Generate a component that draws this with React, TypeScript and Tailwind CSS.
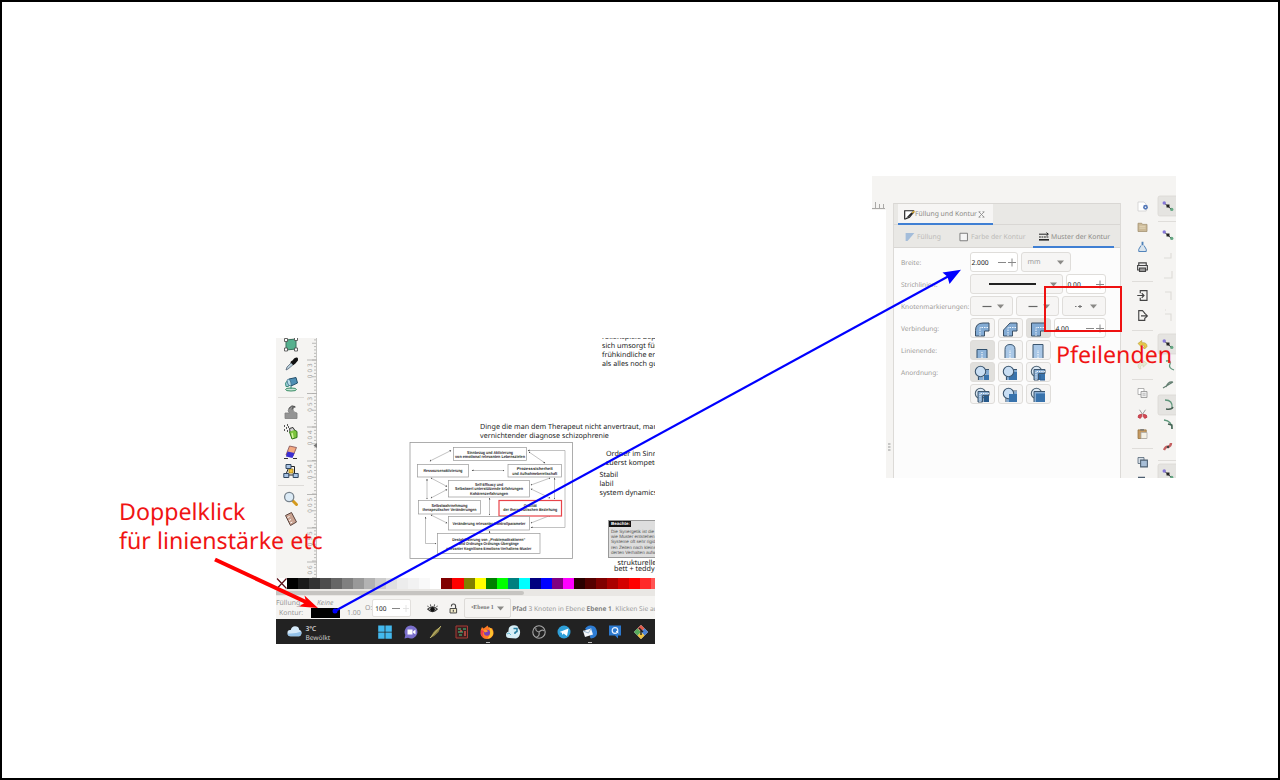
import React from "react";

type Kids = { children?: React.ReactNode };

function Ico({ children, s = 16, c = "" }: Kids & { s?: number; c?: string }) {
  return (
    <svg width={s} height={s} viewBox="0 0 16 16" className={"block shrink-0 " + c} fill="none">
      {children}
    </svg>
  );
}

/* ---------- toolbox ---------- */
function Toolbox() {
  return (
    <div className="flex w-[30px] shrink-0 flex-col items-center bg-[#f5f4f2] pr-[1px]">
      <Ico c="-mt-[1px]">
        <path d="M3 3L13 2L13 12L3 13Z" fill="#56b08e" stroke="#39705c" />
        <path d="M1.500 1.500h3v3h-3zM11.500 .5h3v3h-3zM11.500 11h3v3h-3zM1.500 11h3v3h-3z" fill="#fff" stroke="#555" strokeWidth=".9" />
      </Ico>
      <Ico c="mt-[3px]">
        <path d="M3 14L4 11L9 6L11 8L5 13Z" fill="#b9cfd9" stroke="#567" strokeWidth=".8" />
        <path d="M8 5.500L11 8.500M9.500 6L12 3q2.500-1.500 2 1L11.500 7Z" fill="#111" stroke="#111" strokeWidth="2" />
      </Ico>
      <Ico c="mt-[4px]">
        <ellipse cx="8" cy="13.500" rx="5.500" ry="1.500" fill="#c9e6d8" stroke="#3b8e66" />
        <path d="M6 3L13 1.500L14.500 7L8 10Z" fill="#4f8fb5" stroke="#25506b" />
        <path d="M5 4q-4 3-2 6.500q3 1 3.500-2" fill="#9fd0d8" stroke="#3b8e7e" strokeWidth="1" />
        <path d="M8 10v3" stroke="#3b8e7e" />
        <ellipse cx="6.300" cy="6.500" rx="1.700" ry="3.500" transform="rotate(-18 6 7)" fill="#b8dce9" stroke="#3a6c86" strokeWidth=".7" />
      </Ico>
      <div className="mt-[5px] h-px w-[26px] shrink-0 bg-[#dddbd8]" />
      <Ico c="mt-[6px]">
        <path d="M2 14.500V9h4.500q-2.500-2-.5-5q3-3.500 6.500-1q-3 .5-2.500 3q.4 2.500 4 3v5.500Z" fill="#949494" stroke="#7f7f7f" strokeWidth=".8" />
        <path d="M6 4.500q2.500-4 6-2q-3 0-3 3" stroke="#555" />
      </Ico>
      <Ico c="mt-[4px]">
        <path d="M6.500 8q1-3 4-2.500l3.500 2v6l-5 1.500Z" fill="#7cc53e" stroke="#32741a" />
        <path d="M7 7.500l-.5-3l3.500-1l1.500 2.500" fill="#d6d6d6" stroke="#333" />
        <path d="M1 2h1M3 4h1M1 6h1M4 1h1M4 7h1M5 3h1" stroke="#222" strokeWidth="1.300" />
        <path d="M9 9l1 5" stroke="#d2f29d" strokeWidth="1.500" />
      </Ico>
      <Ico c="mt-[4px]">
        <path d="M1 14.500h4M10 14.500h4" stroke="#333" />
        <path d="M6.500 2L13.500 3.500L10 12L3 11Z" fill="#f2a982" stroke="#7d4b52" strokeWidth=".8" />
        <path d="M4.500 7.500L11.500 9L9.500 14L3 12.500Z" fill="#3b2ed0" />
      </Ico>
      <Ico c="mt-[3px]">
        <path d="M5 3.500h6.500v8M5.500 5L3.500 10M5 12h6" stroke="#222" />
        <path d="M6 6h4v4H6z" fill="#f4c542" stroke="#9a7200" strokeWidth=".7" />
        <path d="M3 1.500h5v4H3zM.8 10.500h5v4h-5zM10.200 10.500h5v4h-5z" fill="#a9c4e6" stroke="#31465f" />
      </Ico>
      <div className="mt-[6px] h-px w-[26px] shrink-0 bg-[#dddbd8]" />
      <Ico c="mt-[5px]">
        <path d="M9.500 9.500L13.500 13.500" stroke="#d49a1e" strokeWidth="3" strokeLinecap="round" />
        <circle cx="6.200" cy="6" r="4.600" fill="#dcebf6" stroke="#77828c" strokeWidth="1.300" />
      </Ico>
      <Ico c="mt-[4px]">
        <path d="M2.500 4.500L8.500 1.500L13.500 11L7.500 14.500Z" fill="#caa391" stroke="#5c4640" />
        <path d="M4.500 6.500l2-1M6 9.500l2-1M7.300 12l2-1" stroke="#fff" />
      </Ico>
    </div>
  );
}

const marks: [number, string][] = [[360, "300"], [393.5, "350"], [427, "400"], [461, "450"], [494.5, "500"], [528, "550"], [562, "60"]];

function Ruler() {
  return (
    <svg width="11" height="240" viewBox="306 338 11 240" className="block shrink-0 bg-[#f5f4f2]">
      {Array.from({ length: 72 }, (_, i) => (
        <path key={i} d={`M${i % 5 === 1 ? 312 : 314} ${339.900 + i * 3.350}h5`} stroke="#aaa9a7" strokeWidth=".8" />
      ))}
      <path d="M316.500 338v240" stroke="#c6c5c3" />
      {marks.map(([y, t]) => (
        <g key={t}>
          <path d={`M307 ${y}h10`} stroke="#b0afad" strokeWidth=".9" />
          {t.split("").map((d, i) => (
            <text key={i} x="311.800" y={y + 2.200 + i * 5.600} fontSize="6.200" fill="#a3a2a0" textAnchor="middle" transform={`rotate(-90 311.800 ${y + 2.200 + i * 5.600}) translate(-3 0)`} fontFamily="Noto Sans, sans-serif">{d}</text>
          ))}
        </g>
      ))}
      <path d="M313.500 445.500l3.500-2.500v5z" fill="#777" />
    </svg>
  );
}

/* ---------- diagram ---------- */
type Node = { x: number; y: number; w: number; h: number; t: [string, number, number][]; red?: boolean };
const nodes: Node[] = [
  { x: 453.5, y: 447.5, w: 73, h: 13, t: [["Sinnbezug und Aktivierung", 453.5, 46], ["von emotional relevanten Lebenszielen", 458, 70]] },
  { x: 417.5, y: 464.5, w: 51, h: 12.5, t: [["Ressourcenaktivierung", 472.3, 39]] },
  { x: 508, y: 464.5, w: 53.5, h: 12.5, t: [["Prozesssicherheit", 470, 36], ["und Aufnahmebereitschaft", 474.500, 45]] },
  { x: 448.5, y: 480.5, w: 81, h: 16.5, t: [["Self-Efficacy und", 486, 28], ["Selbstwert unterstützende Erfahrungen", 490.300, 68], ["Kohärenzerfahrungen", 494.600, 38]] },
  { x: 418.5, y: 500.5, w: 62, h: 13.5, t: [["Selbstwahrnehmung", 506.8, 36], ["therapeutischer Veränderungen", 511.3, 54]] },
  { x: 499, y: 500.5, w: 62.5, h: 15.5, red: true, t: [["Qualität", 506.8, 13], ["der therapeutischen Beziehung", 511.3, 54]] },
  { x: 448.5, y: 516.5, w: 81, h: 13.5, t: [["Veränderung relevanter Kontrollparameter", 525, 73]] },
  { x: 437.5, y: 533.5, w: 102.5, h: 20, t: [["Destabilisierung von „Problemattraktoren“", 541, 73], ["und Ordnungs-Ordnungs-Übergänge", 545.200, 60], ["relevanter Kognitions-Emotions-Verhaltens-Muster", 549.500, 85]] },
];
const links = [
  "M430 461L451 450.500", "M529 452L545 463", "M472 470.500H504", "M431 478L447 486.500", "M431 498L447 489.500",
  "M550 478L531 485", "M531 489L550 498", "M427 479V499", "M554.500 478V499", "M489.500 498V515", "M431 515L447 523",
  "M550 515.500L531 523", "M489.500 531V533", "M436 543.500H425.500V517", "M528 450.500H565V527.500H531",
];

function Diagram() {
  return (
    <svg width="165" height="118" viewBox="409 442 165 118" className="absolute left-[133px] top-[104px]">
      <defs>
        <marker id="h" markerWidth="4" markerHeight="4" refX="2.500" refY="1.500" orient="auto-start-reverse">
          <path d="M0 0L3 1.500L0 3Z" fill="#444" />
        </marker>
      </defs>
      <rect x="410" y="442.500" width="162.500" height="116" fill="#fff" stroke="#999" strokeWidth=".8" />
      {links.map((d) => (
        <path key={d} d={d} fill="none" stroke="#999" strokeWidth=".6" markerStart="url(#h)" markerEnd="url(#h)" />
      ))}
      {nodes.map((n) => (
        <g key={n.y + "-" + n.x}>
          <rect x={n.x} y={n.y} width={n.w} height={n.h} fill="#fff" stroke={n.red ? "#e8444a" : "#999"} strokeWidth={n.red ? 1.2 : 0.7} />
          {n.t.map(([s, y, w]) => (
            <text key={s} x={n.x + n.w / 2} y={y} textAnchor="middle" fontSize="4.200" fontWeight="700" fill="#2a2a2a" textLength={w} lengthAdjust="spacingAndGlyphs" fontFamily="Liberation Sans, sans-serif">{s}</text>
          ))}
        </g>
      ))}
    </svg>
  );
}

function Note({ children, className }: Kids & { className: string }) {
  return <div className={"absolute whitespace-pre text-[7.180px] leading-[9px] text-[#1a1a1a] " + className}>{children}</div>;
}

function Drawing() {
  return (
    <>
      <Note className="left-[326px] top-[-5px]">{"rollenspiele bep\nsich umsorgt für\nfrühkindliche er\nals alles noch gu"}</Note>
      <Note className="left-[204px] top-[85px]">{"Dinge die man dem Therapeut nicht anvertraut, man\nvernichtender diagnose schizophrenie"}</Note>
      <Note className="left-[330px] top-[112px]">{"Ordner im Sinne\nzuerst kompete"}</Note>
      <Note className="left-[323.500px] top-[133px]">{"Stabil\nlabil\nsystem dynamics"}</Note>
      <Diagram />
      <div className="absolute left-[332px] top-[182px] h-[38px] w-[60px] border border-[#999] bg-[#dedede]">
        <div className="flex h-[6px] w-[22px] items-center bg-[#111] pl-[2px] font-['Liberation_Sans',sans-serif] text-[4.500px] font-bold text-white">Beachte:</div>
        <div className="whitespace-pre pl-[2px] pt-[2px] font-['Liberation_Sans',sans-serif] text-[4.600px] leading-[5.200px] text-[#555]">
          {"Die Synergetik ist die Theorie\nwie Muster entstehen und\nSysteme oft sehr rigide\nren Zeiten nach kleinsten\nderten Verhalten aufweisen"}
        </div>
      </div>
      <Note className="left-[341.500px] top-[221px]">strukturelle</Note>
      <Note className="left-[338px] top-[227px]">bett + teddy</Note>
    </>
  );
}

/* ---------- palette and bars ---------- */
const swatches = [
  "#000000", "#1a1a1a", "#333333", "#4d4d4d", "#666666", "#808080", "#999999", "#b3b3b3", "#cccccc", "#e0e0e0", "#ececec", "#f2f2f2", "#f9f9f9", "#ffffff",
  "#800000", "#ff0000", "#808000", "#ffff00", "#008000", "#00ff00", "#008080", "#00ffff", "#000080", "#0000ff", "#800080", "#ff00ff",
  "#2b0000", "#550000", "#800000", "#aa0000", "#d40000", "#ff0000", "#ff2a2a", "#ff5555",
];

function Palette() {
  return (
    <div className="flex h-[11px] shrink-0 overflow-hidden">
      <svg width="11" height="11" viewBox="0 0 11 11" className="shrink-0">
        <path d="M0 0h11v11H0z" fill="#fff" />
        <path d="M1 .5L10.500 10.500M10.500 .5L1 10.500" stroke="#5a1018" strokeWidth="1.200" />
      </svg>
      {swatches.map((c, i) => (
        <div key={i} className="w-[11.040px] shrink-0" style={{ backgroundColor: c }} />
      ))}
    </div>
  );
}

function StatusBar() {
  return (
    <div className="flex h-[23px] shrink-0 items-center overflow-hidden whitespace-nowrap bg-[#f5f4f2] text-[6.900px] text-[#999]">
      <div className="flex w-[89px] shrink-0 flex-col">
        <div className="flex h-[9px] items-center pt-[4px]"><span className="w-[41px]">Füllung:</span><span className="italic">Keine</span></div>
        <div className="flex h-[10px] items-center">
          <span className="w-[35px] pl-[3px] pt-[4px]">Kontur:</span>
          <span className="mt-[2px] h-[10px] w-[29px] bg-black" />
          <span className="pl-[7px] pt-[5px]">1.00</span>
        </div>
      </div>
      <span className="w-[8px] pt-[3px]">O:</span>
      <div className="mt-[1px] flex h-[18px] w-[39px] shrink-0 items-center rounded-[2px] border border-[#e2e0dd] bg-white pl-[2px] text-[6.500px] text-[#222]">
        <span className="w-[17px] pt-[2px]">100</span>
        <svg width="18" height="8" viewBox="0 0 18 8"><path d="M0 4.500h8" stroke="#777" strokeWidth=".9" /><path d="M11 4.500h6M14 1v7" stroke="#ddd" strokeWidth=".8" /></svg>
      </div>
      <Ico s={11} c="ml-[16px] mt-[1px]">
        <path d="M1 9q7-7 14 0q-7 7-14 0Z" fill="#bbb" stroke="#333" strokeWidth="1.500" />
        <circle cx="8" cy="9" r="3.300" fill="#111" />
        <path d="M2 6L1 4M5.500 5L5 2M10.500 5L11 2M14 6l1-2" stroke="#333" strokeWidth="1.200" />
      </Ico>
      <Ico s={11} c="ml-[10px] mt-[1px]">
        <path d="M5 5V4.500q0-3 3-3t3 3v4" stroke="#444" strokeWidth="1.700" />
        <path d="M3 8h9.500v6.500H3z" fill="#f1eac8" stroke="#444" strokeWidth="1.400" />
        <path d="M7.800 9.800v3" stroke="#555" strokeWidth="1.800" />
      </Ico>
      <div className="ml-[5px] mt-[1px] flex h-[20px] w-[47px] shrink-0 items-center justify-between rounded-[2px] border border-[#dddbd8] px-[6px] text-[6px] text-[#777]">
        <span className="font-['Liberation_Serif',serif] font-bold">•Ebene 1</span><Caret />
      </div>
      <span className="pl-[1px] pt-[2px] text-[6.620px]"><b className="font-semibold text-[#777]">Pfad</b> 3 Knoten in Ebene <b className="font-semibold text-[#777]">Ebene 1</b>. Klicken Sie auf</span>
    </div>
  );
}

function Caret() {
  return <svg width="7" height="5" viewBox="0 0 7 5" className="shrink-0"><path d="M0 .5h7L3.500 4.500Z" fill="#8a8986" /></svg>;
}

function Taskbar() {
  return (
    <div className="flex h-[25px] shrink-0 items-center overflow-hidden bg-[#222222] text-[6.600px] text-[#eee]">
      <Ico s={15} c="ml-[11px]">
        <path d="M4 13q-3.500 0-3.500-3.500t3.500-3q1-4 4.500-4Q12.500 2.500 13 6q2.500.5 2.500 3.500t-2.500 3.500Z" fill="#d5e9f9" />
        <path d="M4 13q-3 0-3.400-3q7 1 14.800-2q0 5-2.400 5Z" fill="#93c1e8" />
      </Ico>
      <div className="ml-[3.500px] w-[70.500px] shrink-0 pt-[2px] leading-[9px]"><div className="text-white">3°C</div><div className="text-[#ccc]">Bewölkt</div></div>
      <div className="relative flex shrink-0 gap-[9.600px] pl-[1px]">
        <Ico><path d="M1.200 1.500h6.400v6.200H1.200zM8.400 1.500h6.400v6.200H8.400zM1.200 8.500h6.400v6.200H1.200zM8.400 8.500h6.400v6.200H8.400z" fill="#43b9ee" /></Ico>
        <Ico><path d="M8 1.500a6.500 6.500 0 1 1-3 12.300L1.500 14.500l.8-3.500A6.500 6.500 0 0 1 8 1.500Z" fill="#7a6fcb" /><path d="M4.500 5.500h5v5h-5zM10 7.500l2.500-2v5L10 8.500Z" fill="#fff" /></Ico>
        <Ico><path d="M2.500 14Q5 7 9 5L13 2.500L10.500 8Q7 12 2.500 14Z" fill="#8c8140" /><path d="M2 14L13 2" stroke="#d8cf88" strokeWidth=".8" /></Ico>
        <Ico><path d="M2 2h11.500v12H2z" fill="#3a2020" stroke="#a83a35" /><path d="M4 5h3M9 5h3M4 8h5M5 11h3" stroke="#3f9465" strokeWidth="1.500" /><path d="M11 7v5M7 6v2" stroke="#d8574d" strokeWidth="1.400" /></Ico>
        <Ico>
          <path d="M3 3l1.500 1.500Q7 3 8.500 1.500q.5 2 3 3L13 4q2 3 1.500 6-1.500 5-6.500 5T1.500 10Q1 6 3 3Z" fill="#ff7a24" />
          <path d="M10 3q5 3 4 7.500q-2 4-5.500 4Q13 9 10 3Z" fill="#ffc32e" />
          <path d="M2 6q-1 5 3 8q-3-5 1-7Z" fill="#ef3b4e" />
          <circle cx="8" cy="8.700" r="3" fill="#7941b8" /><path d="M4 6.500q4-2 5 1l-3 1Z" fill="#ff9b2b" />
        </Ico>
        <Ico><path d="M4 14q-3 0-3-3t2.500-3.500Q3 2.500 7 1.500q6-1 6.500 3q2 1 1.500 5T11 14.500Z" fill="#d7eef6" /><path d="M8.500 4.500h3.500v3l-2 1v1.500" stroke="#277d9f" strokeWidth="1.500" /><path d="M2 10l2-1 2 2" stroke="#68b9d0" /></Ico>
        <Ico><circle cx="8" cy="8" r="6.200" fill="#222" stroke="#a9a9a9" strokeWidth="1.100" /><path d="M8 8q-4-1-3-4M8 8q3-3 5.500-1M8 8q1 4-2.500 5" stroke="#999" strokeWidth="1.200" /></Ico>
        <Ico><circle cx="8" cy="8" r="6.500" fill="#2e9fd8" /><path d="M3.500 8L12.500 4.500L11 12L7.500 9.500L6 11V8.800Z" fill="#fff" /></Ico>
        <Ico><path d="M3 5Q5 1 9 1.500q5 0 6 6t-6 7q-2-1 0-5Z" fill="#2d7cd3" /><path d="M1 7l8-2.500l2 6l-8 2.500Z" fill="#f4f7fa" /><path d="M1 7l5.500 2L9 4.500" stroke="#9db7cc" /></Ico>
        <Ico><path d="M2 1.500h12v10h-3v3l-3-3H2Z" fill="#2b79cf" /><circle cx="8" cy="6.500" r="2.800" stroke="#e8f2ff" strokeWidth="1.200" /><path d="M9 7l2.500 2" stroke="#fff" /></Ico>
        <Ico><path d="M8 1L15 8L8 15L1 8Z" fill="#eee" /><path d="M8 1L4.500 4.500L8 8L11.500 4.500Z" fill="#e35b4c" /><path d="M15 8l-3.500-3.500L8 8l3.500 3.500Z" fill="#4b82d5" /><path d="M8 15l-3.500-3.500L8 8l3.500 3.500Z" fill="#efc23c" /><path d="M1 8l3.500-3.500L8 8l-3.500 3.500Z" fill="#58ac5c" /><path d="M6 4l4 4M8 6v5" stroke="#222" strokeWidth="1.400" /></Ico>
        <div className="absolute left-[109.500px] top-[18px] h-[1px] w-[4px] bg-[#bbb]" />
        <div className="absolute left-[212px] top-[18px] h-[1px] w-[4px] bg-[#bbb]" />
      </div>
    </div>
  );
}

function InkscapeWindow() {
  return (
    <section className="absolute left-[276px] top-[338px] flex h-[306px] w-[379px] flex-col overflow-hidden bg-white">
      <div className="flex h-[240px] shrink-0 overflow-hidden"><Toolbox /><Ruler /></div>
      <Drawing />
      <div className="relative flex flex-col">
        <Palette />
        <div className="flex h-[7px] items-center bg-[#e9e7e4]"><div className="h-[4px] w-[248px] rounded-r bg-[#c6c4c1]" /></div>
        <StatusBar />
        <Taskbar />
      </div>
    </section>
  );
}

/* ---------- fill and stroke dialog ---------- */
function Box({ children, className = "" }: Kids & { className?: string }) {
  return <div className={"flex h-[20px] shrink-0 items-center rounded-[3px] border border-[#dfddda] bg-[#f6f5f4] " + className}>{children}</div>;
}

function PlusMinus({ faint = false }: { faint?: boolean }) {
  return (
    <svg width="19" height="9" viewBox="0 0 19 9" className="shrink-0">
      {!faint && <path d="M0 4.500h8" stroke="#888" />}
      <path d="M10 4.500h8M14 .5v8" stroke="#888" />
    </svg>
  );
}

function Row({ label, children }: Kids & { label: string }) {
  return (
    <div className="flex h-[22px] items-center">
      <span className="w-[68.500px] shrink-0 pt-[2px] text-[6.600px] text-[#9c9b98]">{label}</span>
      <div className="flex items-center gap-[3px]">{children}</div>
    </div>
  );
}

function Tile({ on = false, children }: Kids & { on?: boolean }) {
  return <Box className={"w-[25px] justify-center " + (on ? "bg-[#e1e0dd]!" : "")}><Ico s={16} c="mt-[1px]">{children}</Ico></Box>;
}

function Join({ d }: { d: string }) {
  return (
    <>
      <path d={d} fill="#83abd4" />
      <path d={d} stroke="#3b5066" strokeWidth="1" />
      <path d="M6 15V6.500h9" stroke="#eef6ff" strokeWidth="1" strokeDasharray="1.500 1" />
    </>
  );
}

function Order({ v }: { v: number }) {
  const circle = <circle cx="6.500" cy="6.500" r="5.200" fill="#c9def3" stroke="#3c566f" strokeWidth="1.100" />;
  const fill = <path d="M7 7h8v8H7z" fill="#3973ac" />;
  const stroke = <path d="M4 4.500h11v4H8.500v6.500H4Z" fill="#86acd3" stroke="#3c566f" strokeWidth="1" />;
  const ring = <circle cx="6.500" cy="6.500" r="5.200" fill="#dce9f5" stroke="#4d6273" strokeWidth="1.100" />;
  const dash = <path d="M6 15V6.500h9" stroke="#fff" strokeWidth=".9" strokeDasharray="1.300 1" />;
  if (v === 0) return <><path d="M10 10h5v5h-5z" fill="#3973ac" /><path d="M11 4.500h4M4.500 11v4" stroke="#3c566f" strokeWidth="1.200" /><path d="M12 5v5h3V5zM5 12h4.500v3H5z" fill="#86acd3" />{circle}</>;
  if (v === 1) return <><path d="M11 4.500h4M4.500 11v4" stroke="#3c566f" strokeWidth="1.200" /><path d="M12 5h3v3h-3zM5 12h3v3H5z" fill="#86acd3" />{fill}{circle}</>;
  if (v === 2) return <>{ring}<path d="M8.500 8.500h6.500v6.500H8.500z" fill="#3973ac" />{stroke}{dash}<path d="M10 10v5h5" stroke="#2b5d92" /></>;
  if (v === 3) return <>{ring}{stroke}<path d="M9.500 9h5.500v6H9.500z" fill="#285b8d" />{dash}</>;
  if (v === 4) return <><path d="M11 4h4M4 11v4" stroke="#3c566f" strokeWidth="1.100" /><path d="M12 4.500h3v3h-3zM4.500 12h3v3h-3z" fill="#86acd3" />{circle}{fill}</>;
  return <>{ring}<path d="M4 4.500h11V15H4Z" fill="#86acd3" /><path d="M15 4.500H4V15" stroke="#3c566f" /><path d="M6 6.500h9V15H6z" fill="#3973ac" /></>;
}

function Marker({ w, dot = false }: { w: string; dot?: boolean }) {
  return (
    <Box className={"justify-between pl-[11px] pr-[8px] " + w}>
      <svg width="10" height="5" viewBox="0 0 10 5">{dot ? <path d="M1 2.500h1.500M4 2.500h4M6 1v3" stroke="#777" strokeWidth="1.200" /> : <path d="M.5 2.500h9" stroke="#666" strokeWidth="1.200" />}</svg>
      <Caret />
    </Box>
  );
}

function Dialog() {
  return (
    <div className="flex w-[228px] shrink-0 flex-col border-x border-[#dcdad7] bg-[#fcfcfc]">
      <div className="flex h-[22px] shrink-0 border-b border-[#d9d7d4] border-t bg-[#e9e8e5] pl-[4px]">
        <div className="flex h-[21px] w-[95px] items-center border-b-2 border-[#3f7fd3] bg-[#f6f5f4] pl-[6px] pt-[1px] text-[6.800px] text-[#8b8a87]">
          <Ico s={11}><path d="M1 2.500h13v2L8 12l-6 2.500H1Z" fill="#fff" stroke="#222" strokeWidth="1.700" /><path d="M3 13Q8 7 14 2.500L15 5L8 11Z" fill="#222" /><path d="M12 6l3-3" stroke="#e3b230" strokeWidth="2" /></Ico>
          <span className="whitespace-nowrap pt-[1px]">Füllung und Kontur</span>
          <svg width="7" height="7" viewBox="0 0 7 7" className="ml-[1px] mt-[1px]"><path d="M1 1l5 5M6 1L1 6M.5 .8h2M4.500 .8h2M.5 6.200h2M4.500 6.200h2" stroke="#888" strokeWidth=".8" /></svg>
        </div>
      </div>
      <div className="flex h-[23px] shrink-0 items-stretch whitespace-nowrap border-b border-[#d9d7d4] bg-[#e9e8e5] text-[6.800px] text-[#bcbbb8]">
        <div className="flex w-[53px] items-center gap-[2px] pl-[11px] pt-[2px]"><Ico s={10}><path d="M1 1.500h14L4 14.500H1Z" fill="#a4bdda" /></Ico><span className="pt-[1px]">Füllung</span></div>
        <div className="flex w-[86px] items-center gap-[2px] pl-[12px] pt-[2px]"><Ico s={10}><path d="M1.500 2h12v12h-12z" fill="#f5f5f5" stroke="#777" strokeWidth="1.500" /></Ico><span className="pt-[1px]">Farbe der Kontur</span></div>
        <div className="flex h-[23px] w-[81px] items-center gap-[2px] border-b-2 border-[#3f7fd3] pl-[6px] pt-[3px] text-[#8b8a87]"><Ico s={10}><path d="M0 3.500h14M12 1l3 2.500L12 6" stroke="#222" strokeWidth="1.600" /><path d="M0 8h15" stroke="#222" strokeWidth="1.700" strokeDasharray="3 1" /><path d="M0 12.500h16" stroke="#222" strokeWidth="2.500" /></Ico><span className="pt-[1px]">Muster der Kontur</span></div>
      </div>
      <div className="flex flex-col pl-[7px] pt-[3px]">
        <Row label="Breite:">
          <Box className="w-[48px] bg-white! pl-[1px] text-[6.700px] text-[#222]"><span className="w-[27px] pt-[2px]">2.000</span><PlusMinus /></Box>
          <Box className="w-[50px] justify-between pl-[6px] pr-[6px] text-[7px] text-[#999]"><span className="pt-[2px]">mm</span><Caret /></Box>
        </Row>
        <Row label="Strichlinien:">
          <Box className="w-[93px] pl-[18px] pr-[5px]"><span className="h-[1.500px] w-[47px] bg-[#222]" /><span className="ml-auto"><Caret /></span></Box>
          <Box className="w-[40px] justify-between bg-white! pl-[1px] text-[6.700px] text-[#222]"><span className="pt-[2px]">0.00</span><PlusMinus faint /></Box>
        </Row>
        <Row label="Knotenmarkierungen:"><Marker w="w-[43px]" /><Marker w="w-[43px]" /><Marker w="w-[44px]" dot /></Row>
        <Row label="Verbindung:">
          <Tile><Join d="M1.500 15V9.500Q1.500 2 9 2H15V10H10.500V15Z" /></Tile>
          <Tile><Join d="M1.500 15V9L8 2H15V10H10.500V15Z" /></Tile>
          <Tile on><Join d="M1.500 15V2H15V10H10.500V15Z" /></Tile>
          <Box className="w-[52px] justify-between bg-white! pl-[1px] text-[6.700px] text-[#222]"><span className="pt-[2px]">4.00</span><PlusMinus /></Box>
        </Row>
        <Row label="Linienende:">
          <Tile on><path d="M3 15V6.500h10v8.500" fill="#8fb4d9" stroke="#31506e" /><path d="M8 15V9" stroke="#fff" strokeDasharray="1.500 1" /></Tile>
          <Tile><path d="M3 15V6.500q0-5 5-5t5 5v8.500" fill="#a9c7e6" stroke="#3c566f" /><path d="M8 15V7" stroke="#fff" strokeDasharray="1.500 1" /></Tile>
          <Tile><path d="M3 15V1.500h10v13.500" fill="#a9c7e6" stroke="#3c566f" /><path d="M8 15V7" stroke="#fff" strokeDasharray="1.500 1" /></Tile>
        </Row>
        <Row label="Anordnung:"><Tile on><Order v={0} /></Tile><Tile><Order v={1} /></Tile><Tile><Order v={2} /></Tile></Row>
        <Row label=""><Tile><Order v={3} /></Tile><Tile><Order v={4} /></Tile><Tile><Order v={5} /></Tile></Row>
      </div>
    </div>
  );
}

/* ---------- command and snap bars ---------- */
function At({ x = 1136.5, y, children }: Kids & { x?: number; y: number }) {
  return <g transform={`translate(${x} ${y - 6}) scale(.75)`}>{children}</g>;
}

function Snap({ y }: { y: number }) {
  return <At x={1162} y={y}><path d="M3 4l9 8" stroke="#333" strokeWidth="1.300" /><path d="M6 6h4v4H6z" fill="#222" /><circle cx="3" cy="4" r="2.300" fill="#8577d8" /><circle cx="13" cy="12.500" r="2.200" fill="#64a783" /></At>;
}

function CommandIcons() {
  return (
    <svg width="56" height="302" viewBox="1120 176 56 302" className="block shrink-0" fill="none">
      <path d="M1132 281.500h21M1132 330.500h21M1132 379.500h21M1132 448.500h21M1158 221.500h18M1158 460.500h18" stroke="#dfddda" />
      {[[196, 20], [334, 20], [395, 20], [464, 16]].map(([y, h]) => (
        <rect key={y} x="1158" y={y} width="22" height={h} rx="2" fill="#e5e4e1" stroke="#d8d6d3" strokeWidth=".7" />
      ))}
      <At y={206.5}><path d="M2 2h8l3 3v9H2z" fill="#fff" stroke="#ccc" /><circle cx="12" cy="9" r="3.200" fill="#5478b8" /><circle cx="12" cy="9" r="1.100" fill="#fff" /></At>
      <At y={227}><path d="M2 3h5l1 1.500h6V14H2z" fill="#cbb997" stroke="#a18f6d" /><path d="M4 7h8M4 9.500h8" stroke="#eee1c5" /></At>
      <At y={247}><path d="M8 1v5" stroke="#4d81b9" strokeWidth="2.500" /><path d="M6 6L3 11v3h10v-3L10 6" fill="#d9e4ed" stroke="#4d81b9" strokeWidth="1.300" /></At>
      <At y={267}><path d="M3 2.500h10V6H3zM1.500 6h13v6h-13zM4 9.500h8V14H4z" fill="#eee" stroke="#444" strokeWidth="1.500" /></At>
      <At y={295.500}><path d="M5 5V1.500h9v13H5V11" stroke="#444" strokeWidth="1.500" /><path d="M1 8h8M7 5l3 3-3 3" stroke="#444" strokeWidth="1.500" /></At>
      <At y={315.500}><path d="M11 6V5L8 1.500H3v13h8V11" stroke="#444" strokeWidth="1.500" /><path d="M6 8.500h8M11.500 5.500l3 3-3 3" stroke="#444" strokeWidth="1.500" /></At>
      <At y={345}><path d="M2 6l5-4v3q7-1 7 5q-3 5-5 2q3-4-2-4v3Z" fill="#e7c94b" stroke="#b39a36" strokeWidth=".8" /></At>
      <At y={365}><path d="M14 6L9 2v3q-7-1-7 5q2 5 4 3q-2-5 3-5v3Z" fill="#e6ead4" stroke="#cdd5b3" strokeWidth=".8" /></At>
      <At y={393}><path d="M2 2h8v8H2z" fill="#fff" stroke="#999" /><path d="M6 6h8v8H6z" fill="#eee" stroke="#888" /><path d="M8 9h4M8 11h4" stroke="#aaa" /></At>
      <At y={413.500}><path d="M4 3l4 6M12 3L8 9" stroke="#999" strokeWidth="1.300" /><path d="M2 13l1-3 4-1v3l-2 2.500zM14 13l-1-3-4-1v3l2 2.500z" fill="#d64a55" stroke="#b5303c" /></At>
      <At y={434}><path d="M2 2.500h11V14H2z" fill="#c59a62" stroke="#93723f" /><path d="M6 6h8v8H6z" fill="#f4f0e4" stroke="#aaa" /><path d="M5 1.500h5v2H5z" fill="#777" /></At>
      <At y={462}><path d="M2 2h8v8H2z" fill="#d7dfe7" stroke="#4c5f70" /><path d="M5.500 5.500h9v9h-9z" fill="#a8bfd7" stroke="#4c5f70" strokeWidth="1.400" /></At>
      <path d="M1138 477.500h7" stroke="#4c5f70" strokeWidth="1.500" />
      <Snap y={206} /><Snap y={235} /><Snap y={344} /><Snap y={474} />
      <path d="M1164 258h7v-5M1164 278h8v-7M1165 292h6v8M1165 314h6v7M1165 310h1" stroke="#dddbd8" strokeWidth="1.100" />
      <path d="M1166 361q6-1 4 3q-2 4 4 6M1165 400q8 0 7 8M1164 420q8 1 8 9" stroke="#5d957a" strokeWidth="1.300" />
      <path d="M1163 388l10-6M1166 387q2-6 7-5" stroke="#627d70" strokeWidth="1.200" />
      <path d="M1166 409q6 1 7-2M1168 424l4 1v4" stroke="#455f52" strokeWidth="1.300" />
      <path d="M1164 450q2-4 4-3q3-1 3-4" stroke="#c46061" strokeWidth="2.400" />
      <circle cx="1168" cy="447" r="1.200" fill="#444" />
    </svg>
  );
}

function FillStrokeWindow() {
  return (
    <section className="absolute left-[872px] top-[176px] flex h-[302px] w-[304px] overflow-hidden bg-[#f5f4f2]">
      <div className="flex w-[14px] shrink-0 flex-col">
        <svg width="14" height="34" viewBox="0 0 14 34" className="shrink-0"><path d="M0 32.500h13M3.500 32v-6M7.500 32v-4M11.500 32v-4" stroke="#aaa9a7" fill="none" /></svg>
        <div className="flex-1 bg-white" />
      </div>
      <div className="flex w-[234px] shrink-0 pt-[27px]">
        <div className="flex w-[7px] shrink-0 items-end justify-center pb-[27px]">
          <svg width="3" height="8" viewBox="0 0 3 8"><path d="M0 1h2.500M0 4h2.500M0 7h2.500" stroke="#999" strokeWidth="1.200" /></svg>
        </div>
        <Dialog />
      </div>
      <CommandIcons />
    </section>
  );
}

function Arrows() {
  return (
    <svg width="1280" height="780" viewBox="0 0 1280 780" className="pointer-events-none absolute inset-0">
      <path d="M335 611L948 276.500" stroke="#0000ff" strokeWidth="2.200" />
      <path d="M961 269.800L942.500 272.500L947.500 276.700L949.500 284Z" fill="#0000ff" />
      <path d="M215 559.500L307 602.500" stroke="#ff0000" strokeWidth="4" />
      <path d="M318 608L304.500 595.500L306 602L299 606.500Z" fill="#ff0000" />
      <circle cx="335" cy="611" r="2.500" fill="#0000ff" />
    </svg>
  );
}

export default function App() {
  return (
    <main className="relative h-[780px] w-[1280px] overflow-hidden bg-white font-['Noto_Sans',sans-serif] [text-rendering:geometricPrecision]">
      <InkscapeWindow />
      <FillStrokeWindow />
      <Arrows />
      <div className="absolute left-[119px] top-[497px] whitespace-pre text-[23.200px] leading-[29.300px] text-[#f01414]">{"Doppelklick\nfür linienstärke etc"}</div>
      <div className="absolute left-[1044px] top-[286px] h-[46px] w-[78px] border-2 border-[#ee1111]" />
      <div className="absolute left-[1056px] top-[339px] whitespace-nowrap text-[23.200px] leading-[30px] text-[#f01414]">Pfeilenden</div>
      <div className="pointer-events-none absolute inset-0 border-2 border-black" />
    </main>
  );
}
